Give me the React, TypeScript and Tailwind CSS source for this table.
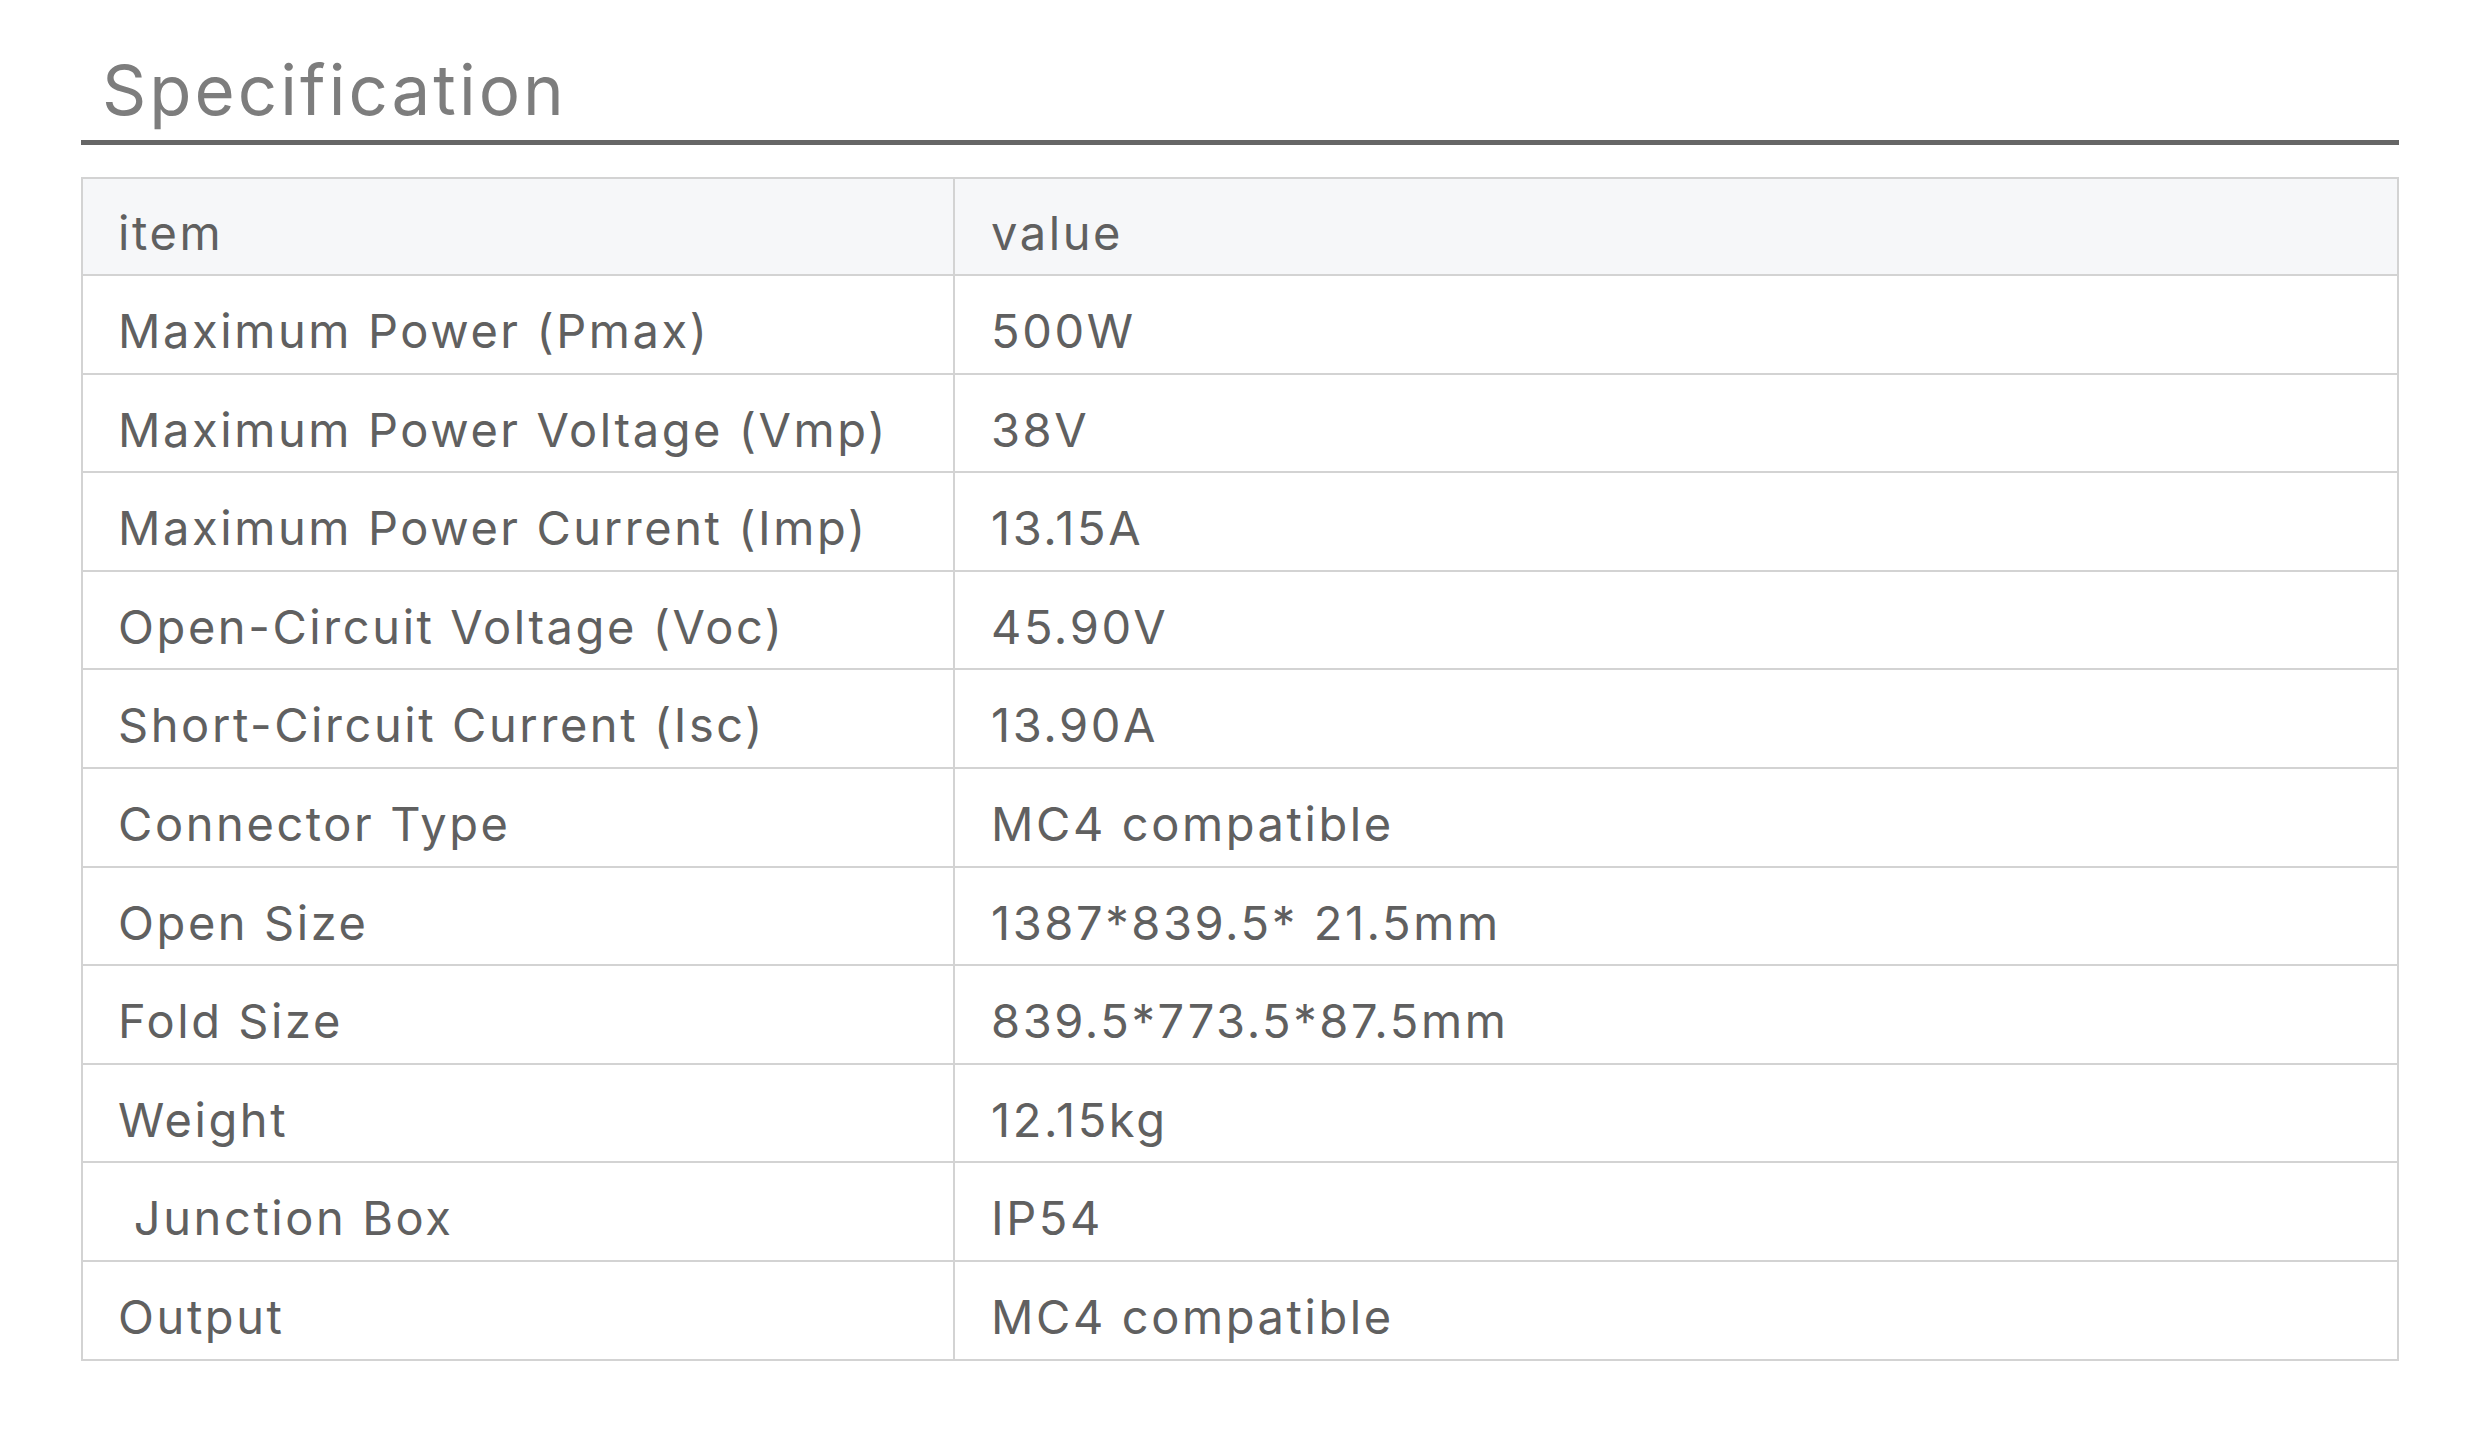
const rows: [string, string][] = [
  ["Maximum Power (Pmax)", "500W"],
  ["Maximum Power Voltage (Vmp)", "38V"],
  ["Maximum Power Current (Imp)", "13.15A"],
  ["Open-Circuit Voltage (Voc)", "45.90V"],
  ["Short-Circuit Current (Isc)", "13.90A"],
  ["Connector Type", "MC4 compatible"],
  ["Open Size", "1387*839.5* 21.5mm"],
  ["Fold Size", "839.5*773.5*87.5mm"],
  ["Weight", "12.15kg"],
  ["\u00a0Junction Box", "IP54"],
  ["Output", "MC4 compatible"],
];

export default function App() {
  return (
    <div
      className="min-h-screen bg-white px-[81px] pt-[50px]"
      style={{ fontFamily: "Inter, 'Open Sans', sans-serif" }}
    >
      <div className="border-b-[5px] border-[#666666]">
        <h2 className="pl-[21px] pb-[10px] text-[69px] font-normal leading-[80px] tracking-[0.044em] text-[#7d7d7d]">
          Specification
        </h2>
      </div>

      <table className="mt-[32px] w-full border-collapse text-[47px] tracking-[0.055em] text-[#606060]">
        <thead>
          <tr className="h-[97px] bg-[#f6f7f9]">
            <th className="w-[872px] border-2 border-[#d3d3d3] pl-[35px] pt-[14px] text-left font-normal">
              item
            </th>
            <th className="border-2 border-[#d3d3d3] pl-[36px] pt-[14px] text-left font-normal">
              value
            </th>
          </tr>
        </thead>
        <tbody>
          {rows.map(([item, value]) => (
            <tr key={item} className="h-[98.6px]">
              <td className="border-2 border-[#d3d3d3] pl-[35px] pt-[14px]">{item}</td>
              <td className="border-2 border-[#d3d3d3] pl-[36px] pt-[14px]">{value}</td>
            </tr>
          ))}
        </tbody>
      </table>
    </div>
  );
}
